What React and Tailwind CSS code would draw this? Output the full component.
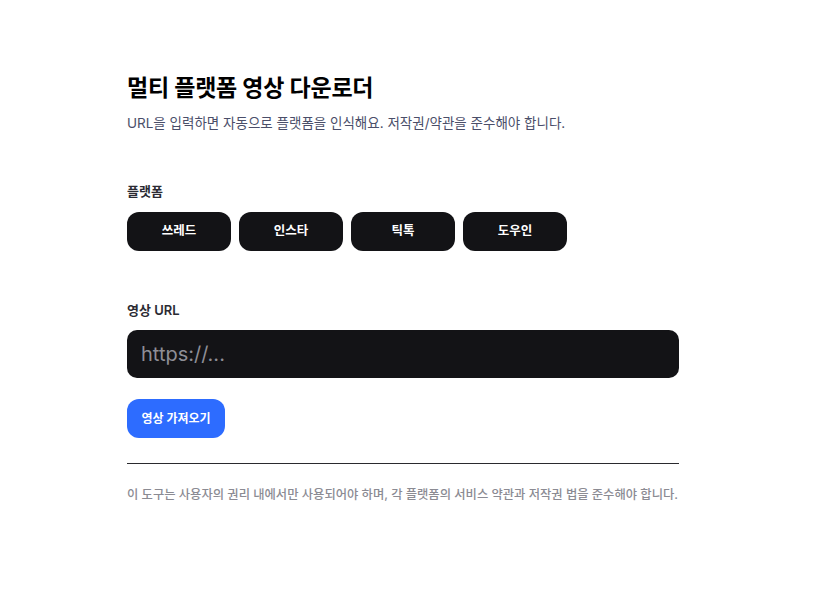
export default function App() {
  const platforms = ["쓰레드", "인스타", "틱톡", "도우인"];
  return (
    <div
      className="min-h-screen bg-white"
      style={{ fontFamily: "Inter, 'Noto Sans CJK KR', sans-serif" }}
    >
      <div className="ml-[127px] w-[552px] pt-[73px]">
        <h1 className="text-[23px] leading-[30px] font-bold text-black tracking-[-0.2px]">
          멀티 플랫폼 영상 다운로더
        </h1>
        <p className="mt-[10px] text-[13.5px] leading-5 text-[#4a4e69]">
          URL을 입력하면 자동으로 플랫폼을 인식해요. 저작권/약관을 준수해야 합니다.
        </p>

        <div className="mt-[49px] text-[13px] leading-[18px] font-semibold text-[#2b2b33]">
          플랫폼
        </div>
        <div className="mt-3 flex gap-2">
          {platforms.map((p) => (
            <button
              key={p}
              className="w-[104px] h-[39px] rounded-xl bg-[#131316] text-white text-[12.5px] font-bold"
            >
              {p}
            </button>
          ))}
        </div>

        <div className="mt-[50px] text-[13px] leading-[18px] font-semibold text-[#2b2b33]">
          영상 URL
        </div>
        <input
          className="mt-[11px] block w-full h-[48px] rounded-[10px] bg-[#131316] px-[14px] text-[20px] text-white placeholder:text-[#8e8e96] outline-none"
          placeholder="https://..."
        />
        <button className="mt-[21px] block w-[98px] h-[39px] rounded-xl bg-[#2d6cff] text-white text-[12px] font-bold">
          영상 가져오기
        </button>

        <div className="mt-[25px] h-px bg-[#2a2a2e]" />
        <p className="mt-[23px] text-[12.3px] leading-4 font-medium text-[#8b8b93] whitespace-nowrap">
          이 도구는 사용자의 권리 내에서만 사용되어야 하며, 각 플랫폼의 서비스 약관과 저작권 법을 준수해야 합니다.
        </p>
      </div>
    </div>
  );
}
